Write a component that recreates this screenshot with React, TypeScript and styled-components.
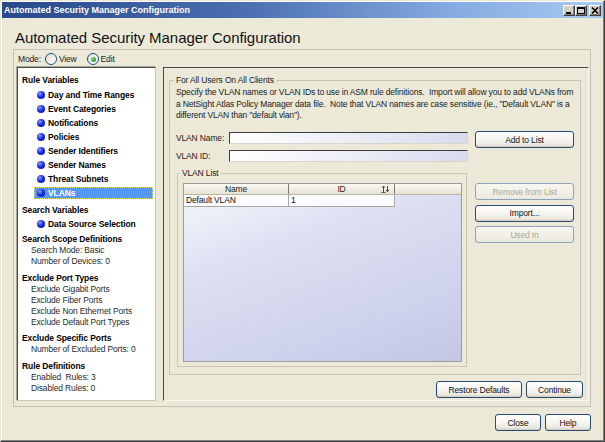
import React from "react";
import styled, { createGlobalStyle, css } from "styled-components";

const FONT = `"Liberation Sans", Arial, Helvetica, sans-serif`;

const Global = createGlobalStyle`
  html, body { margin: 0; padding: 0; background: #ece9d8; }
  body { font-family: ${FONT}; }
  * { box-sizing: border-box; }
`;

const Window = styled.div`
  width: 605px;
  height: 442px;
  background: #ece9d8;
  border: 1px solid;
  border-color: #ece9d8 #404040 #404040 #ece9d8;
  box-shadow: inset -1px -1px 0 #808080, inset 1px 1px 0 #fff;
  padding: 1px;
  display: flex;
  flex-direction: column;
  font-family: ${FONT};
  font-size: 8.5px;
  letter-spacing: -0.15px;
  color: #1a1a1a;
  overflow: hidden;
`;

const TitleBar = styled.div`
  height: 16px;
  flex: none;
  display: flex;
  align-items: center;
  padding: 0 2px 0 2px;
  background: linear-gradient(to right, #28498c 0%, #4a6eb0 40%, #86abe0 75%, #a6caf0 100%);
`;

const TitleText = styled.div`
  color: #fff;
  font-weight: bold;
  font-size: 9px;
  letter-spacing: 0;
`;

const WinControls = styled.div`
  margin-left: auto;
  display: flex;
  align-items: center;
`;

const WinBtn = styled.div<{ $gap?: number }>`
  width: 12px;
  height: 11px;
  margin-left: ${(p) => p.$gap ?? 0}px;
  background: #d4d0c8;
  border: 1px solid;
  border-color: #fff #404040 #404040 #fff;
  box-shadow: inset -1px -1px 0 #808080;
  display: flex;
  align-items: center;
  justify-content: center;
`;

const Body = styled.div`
  flex: 1;
  display: flex;
  flex-direction: column;
  padding-left: 11px;
`;

const Heading = styled.h1`
  margin: 10px 0 0 2px;
  font-size: 15px;
  line-height: 20px;
  height: 20px;
  font-weight: normal;
  letter-spacing: -0.05px;
  color: #111;
`;

const Frame = styled.div`
  margin-top: 1px;
  width: 578px;
  height: 358px;
  border: 1px solid #c5c2b2;
  padding: 3px 1px 5px 3px;
  display: flex;
  flex-direction: column;
`;

const ModeRow = styled.div`
  height: 12px;
  display: flex;
  align-items: center;
  padding-left: 1px;
`;

const ModeText = styled.span<{ $ml?: number }>`
  margin-left: ${(p) => p.$ml ?? 0}px;
  line-height: 12px;
`;

const Radio = styled.span<{ $checked?: boolean; $ml: number }>`
  position: relative;
  width: 12px;
  height: 12px;
  margin-left: ${(p) => p.$ml}px;
  border-radius: 50%;
  border: 1px solid #1c5180;
  background: linear-gradient(135deg, #dcd9cc 0%, #f4f3ee 55%, #ffffff 100%);
  flex: none;
  ${(p) =>
    p.$checked &&
    css`
      &::after {
        content: "";
        position: absolute;
        left: 2.5px;
        top: 2.5px;
        width: 5px;
        height: 5px;
        border-radius: 50%;
        background: radial-gradient(circle at 35% 35%, #7ddc7d, #21a121 70%, #107010);
      }
    `}
`;

const Columns = styled.div`
  margin-top: 2px;
  height: 334px;
  display: flex;
  gap: 7px;
`;

const NavPanel = styled.div`
  width: 139px;
  height: 334px;
  flex: none;
  background: #fff;
  border: 1px solid;
  border-color: #4a4a4a #c9c6b8 #c9c6b8 #4a4a4a;
  box-shadow: -1px -1px 0 #a8a698;
  padding: 6px 0 0 4px;
  display: flex;
  flex-direction: column;
`;

const NavSection = styled.div<{ $mt: number }>`
  margin-top: ${(p) => p.$mt}px;
  display: flex;
  flex-direction: column;
`;

const NavHeader = styled.div`
  height: 12px;
  line-height: 12px;
  font-weight: bold;
  letter-spacing: -0.1px;
  color: #000;
`;

const BulletList = styled.div<{ $mt: number }>`
  margin-top: ${(p) => p.$mt}px;
  display: flex;
  flex-direction: column;
`;

const BulletRow = styled.div<{ $selected?: boolean }>`
  height: 12px;
  margin: 1px 2px 1px 12px;
  padding-left: 3px;
  display: flex;
  align-items: center;
  gap: 3px;
  font-weight: bold;
  letter-spacing: -0.1px;
  color: #000;
  ${(p) =>
    p.$selected &&
    css`
      background: #5597f5;
      color: #fff;
      outline: 1px dotted #f2e56a;
      outline-offset: -1px;
    `}
`;

const Bullet = styled.span`
  width: 8px;
  height: 8px;
  flex: none;
  border-radius: 50%;
  background: radial-gradient(circle at 35% 32%, #8d9bff 0%, #1b2fe0 45%, #000a8c 100%);
`;

const PlainRow = styled.div`
  height: 11px;
  line-height: 11px;
  padding-left: 9px;
  color: #2a2a2a;
  white-space: nowrap;
`;

const ContentPanel = styled.div`
  flex: 1;
  height: 334px;
  border: 1px solid;
  border-color: #4a4a4a #f6f5f0 #f6f5f0 #4a4a4a;
  padding: 7px 5px 2px 5px;
  display: flex;
  flex-direction: column;
`;

const Group = styled.fieldset`
  margin: 0 2px 0 0;
  padding: 1px 6px 7px 6px;
  height: 300px;
  min-width: 0;
  border: 1px solid #c9c6b6;
`;

const Legend = styled.legend<{ $ml: number }>`
  padding: 0 2px;
  margin-left: ${(p) => p.$ml}px;
  line-height: 10px;
  font-size: 8.5px;
  color: #222;
`;

const Intro = styled.p`
  margin: 1px 0 0;
  line-height: 11.5px;
  color: #222;
  white-space: nowrap;
`;

const FormGrid = styled.div`
  margin-top: 9.5px;
  display: grid;
  grid-template-columns: 292px 99px;
  column-gap: 7px;
  align-items: start;
`;

const FieldRows = styled.div`
  display: flex;
  flex-direction: column;
  gap: 5px;
`;

const FieldRow = styled.div`
  height: 13px;
  display: flex;
  align-items: center;
`;

const FieldLabel = styled.label`
  width: 53px;
  flex: none;
  color: #222;
`;

const TextInput = styled.div`
  width: 239px;
  height: 12px;
  border: 1px solid;
  border-color: #3c3c3c #d8d6cc #d8d6cc #3c3c3c;
  background: linear-gradient(to right, #ffffff 0%, #f0f1f8 40%, #d7dbee 100%);
`;

const ListGroup = styled.fieldset`
  margin: 6px 0 0 1px;
  width: 290px;
  padding: 5px 4px 4px 5px;
  min-width: 0;
  border: 1px solid #c9c6b6;
`;

const Table = styled.div`
  width: 279px;
  height: 179px;
  border: 1px solid #9d9d9d;
  background: linear-gradient(160deg, #f6f7fc 0%, #dde0f2 35%, #cfd3ec 70%, #c3c7e4 100%);
  display: flex;
  flex-direction: column;
`;

const HeaderRow = styled.div`
  height: 11px;
  display: grid;
  grid-template-columns: 105px 106px 1fr;
  background: linear-gradient(#fbfaf5, #e6e3d4);
  border-bottom: 1px solid #b9b6a6;
`;

const HeaderCell = styled.div<{ $sep?: boolean }>`
  position: relative;
  line-height: 10px;
  text-align: center;
  color: #222;
  border-right: ${(p) => (p.$sep ? "1px solid #7d7d7d" : "none")};
`;

const SortIcon = styled.svg`
  position: absolute;
  right: 3px;
  top: 1px;
`;

const DataRow = styled.div`
  height: 12px;
  display: grid;
  grid-template-columns: 105px 106px 1fr;
`;

const Cell = styled.div`
  background: #fbfbfd;
  border-right: 1px solid #a6a6a6;
  border-bottom: 1px solid #a6a6a6;
  padding-left: 2px;
  line-height: 11px;
  color: #111;
`;

const ButtonStack = styled.div`
  margin-top: 21px;
  display: flex;
  flex-direction: column;
  gap: 4.5px;
`;

const XpButton = styled.button<{ $w?: number }>`
  width: ${(p) => (p.$w ? `${p.$w}px` : "100%")};
  height: 17px;
  padding: 0;
  font-family: ${FONT};
  font-size: 8.5px;
  letter-spacing: -0.15px;
  color: #111;
  border: 1px solid #274a7a;
  border-radius: 3px;
  background: linear-gradient(#ffffff 0%, #f7f6f1 45%, #ecebe4 80%, #dcd8c8 100%);
  box-shadow: inset 0 -1px 0 #d6d0bd;
  &:disabled {
    color: #aca899;
    border-color: #8fa1bb;
    background: linear-gradient(#f7f6f0, #ebe9df);
    box-shadow: none;
  }
`;

const ActionBar = styled.div`
  margin-top: 6px;
  display: flex;
  justify-content: flex-end;
  gap: 4px;
`;

const Footer = styled.div`
  margin-top: 7px;
  padding-right: 12px;
  display: flex;
  justify-content: flex-end;
  gap: 4px;
`;

const ruleVars = [
  "Day and Time Ranges",
  "Event Categories",
  "Notifications",
  "Policies",
  "Sender Identifiers",
  "Sender Names",
  "Threat Subnets",
];

export default function App() {
  return (
    <>
      <Global />
      <Window>
        <TitleBar>
          <TitleText>Automated Security Manager Configuration</TitleText>
          <WinControls>
            <WinBtn>
              <svg width="8" height="7" viewBox="0 0 8 7">
                <rect x="1" y="5" width="5" height="2" fill="#000" />
              </svg>
            </WinBtn>
            <WinBtn>
              <svg width="8" height="7" viewBox="0 0 8 7">
                <rect x="0.5" y="0.5" width="7" height="6" fill="none" stroke="#000" />
                <rect x="0" y="0" width="8" height="2" fill="#000" />
              </svg>
            </WinBtn>
            <WinBtn $gap={2}>
              <svg width="8" height="7" viewBox="0 0 8 7">
                <path d="M1 0.5 L7 6.5 M7 0.5 L1 6.5" stroke="#000" strokeWidth="1.6" />
              </svg>
            </WinBtn>
          </WinControls>
        </TitleBar>
        <Body>
          <Heading>Automated Security Manager Configuration</Heading>
          <Frame>
            <ModeRow>
              <ModeText>Mode:</ModeText>
              <Radio $ml={4} />
              <ModeText $ml={2}>View</ModeText>
              <Radio $ml={10.5} $checked />
              <ModeText $ml={1.5}>Edit</ModeText>
            </ModeRow>
            <Columns>
              <NavPanel>
                <NavSection $mt={0}>
                  <NavHeader>Rule Variables</NavHeader>
                  <BulletList $mt={2}>
                    {ruleVars.map((r) => (
                      <BulletRow key={r}>
                        <Bullet />
                        {r}
                      </BulletRow>
                    ))}
                    <BulletRow $selected>
                      <Bullet />
                      VLANs
                    </BulletRow>
                  </BulletList>
                </NavSection>
                <NavSection $mt={4}>
                  <NavHeader>Search Variables</NavHeader>
                  <BulletList $mt={1}>
                    <BulletRow>
                      <Bullet />
                      Data Source Selection
                    </BulletRow>
                  </BulletList>
                </NavSection>
                <NavSection $mt={2}>
                  <NavHeader>Search Scope Definitions</NavHeader>
                  <PlainRow>Search Mode: Basic</PlainRow>
                  <PlainRow>Number of Devices: 0</PlainRow>
                </NavSection>
                <NavSection $mt={5}>
                  <NavHeader>Exclude Port Types</NavHeader>
                  <PlainRow>Exclude Gigabit Ports</PlainRow>
                  <PlainRow>Exclude Fiber Ports</PlainRow>
                  <PlainRow>Exclude Non Ethernet Ports</PlainRow>
                  <PlainRow>Exclude Default Port Types</PlainRow>
                </NavSection>
                <NavSection $mt={4}>
                  <NavHeader>Exclude Specific Ports</NavHeader>
                  <PlainRow>Number of Excluded Ports: 0</PlainRow>
                </NavSection>
                <NavSection $mt={5}>
                  <NavHeader>Rule Definitions</NavHeader>
                  <PlainRow>Enabled&nbsp; Rules: 3</PlainRow>
                  <PlainRow>Disabled Rules: 0</PlainRow>
                </NavSection>
              </NavPanel>
              <ContentPanel>
                <Group>
                  <Legend $ml={-2}>For All Users On All Clients</Legend>
                  <Intro>
                    Specify the VLAN names or VLAN IDs to use in ASM rule definitions.{"\u00a0 "}Import will allow you
                    to add VLANs from
                    <br />a NetSight Atlas Policy Manager data file.{"\u00a0 "}Note that VLAN names are case sensitive
                    (ie., "Default VLAN" is a
                    <br />
                    different VLAN than "default vlan").
                  </Intro>
                  <FormGrid>
                    <FieldRows>
                      <FieldRow>
                        <FieldLabel>VLAN Name:</FieldLabel>
                        <TextInput />
                      </FieldRow>
                      <FieldRow>
                        <FieldLabel>VLAN ID:</FieldLabel>
                        <TextInput />
                      </FieldRow>
                    </FieldRows>
                    <XpButton>Add to List</XpButton>
                    <ListGroup>
                      <Legend $ml={-3}>VLAN List</Legend>
                      <Table>
                        <HeaderRow>
                          <HeaderCell $sep>Name</HeaderCell>
                          <HeaderCell $sep>
                            ID
                            <SortIcon width="10" height="8" viewBox="0 0 10 8">
                              <path d="M2.5 7 V1 M1 2.5 L2.5 1 L4 2.5" stroke="#333" strokeWidth="0.9" fill="none" />
                              <path d="M6.5 1 V6.5 M5 5 L6.5 6.5 L8 5" stroke="#333" strokeWidth="0.9" fill="none" />
                              <path d="M0.5 7.5 H4.5" stroke="#333" strokeWidth="0.8" />
                            </SortIcon>
                          </HeaderCell>
                          <HeaderCell />
                        </HeaderRow>
                        <DataRow>
                          <Cell>Default VLAN</Cell>
                          <Cell>1</Cell>
                        </DataRow>
                      </Table>
                    </ListGroup>
                    <ButtonStack>
                      <XpButton disabled>Remove from List</XpButton>
                      <XpButton>Import...</XpButton>
                      <XpButton disabled>Used In</XpButton>
                    </ButtonStack>
                  </FormGrid>
                </Group>
                <ActionBar>
                  <XpButton $w={86}>Restore Defaults</XpButton>
                  <XpButton $w={57}>Continue</XpButton>
                </ActionBar>
              </ContentPanel>
            </Columns>
          </Frame>
          <Footer>
            <XpButton $w={46}>Close</XpButton>
            <XpButton $w={46}>Help</XpButton>
          </Footer>
        </Body>
      </Window>
    </>
  );
}
